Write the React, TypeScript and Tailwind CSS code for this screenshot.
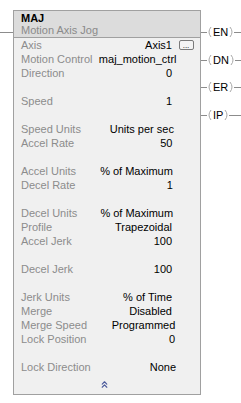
import { ChevronsUp } from "lucide-react";

type Row = { label: string; value: string } | null;

const rows: Row[] = [
  { label: "Axis", value: "Axis1" },
  { label: "Motion Control", value: "maj_motion_ctrl" },
  { label: "Direction", value: "0" },
  null,
  { label: "Speed", value: "1" },
  null,
  { label: "Speed Units", value: "Units per sec" },
  { label: "Accel Rate", value: "50" },
  null,
  { label: "Accel Units", value: "% of Maximum" },
  { label: "Decel Rate", value: "1" },
  null,
  { label: "Decel Units", value: "% of Maximum" },
  { label: "Profile", value: "Trapezoidal" },
  { label: "Accel Jerk", value: "100" },
  null,
  { label: "Decel Jerk", value: "100" },
  null,
  { label: "Jerk Units", value: "% of Time" },
  { label: "Merge", value: "Disabled" },
  { label: "Merge Speed", value: "Programmed" },
  { label: "Lock Position", value: "0" },
  null,
  { label: "Lock Direction", value: "None" },
];

const outputs = [
  { name: "EN", mt: "mt-[15px]" },
  { name: "DN", mt: "mt-[14px]" },
  { name: "ER", mt: "mt-[13px]" },
  { name: "IP", mt: "mt-[14px]" },
];

function Coil({ name }: { name: string }) {
  return (
    <div className="flex items-center h-[14px]">
      <div className="w-[6px] h-px bg-[#8c8c8c]" />
      <svg width="5" height="12" viewBox="0 0 5 12" className="shrink-0">
        <path d="M4 1 Q0 6 4 11" fill="none" stroke="#a8a8a8" strokeWidth="1" />
      </svg>
      <span className="px-[1px] text-black leading-none">{name}</span>
      <svg width="5" height="12" viewBox="0 0 5 12" className="shrink-0">
        <path d="M1 1 Q5 6 1 11" fill="none" stroke="#a8a8a8" strokeWidth="1" />
      </svg>
      <div className="flex-1 h-px bg-[#8c8c8c]" />
    </div>
  );
}

export default function App() {
  return (
    <div className="w-[241px] h-[403px] bg-white overflow-hidden font-['Liberation_Sans',Arial,sans-serif] text-[11px]">
      <div className="flex pt-[10px]">
        <div className="w-[13px] shrink-0">
          <div className="mt-[22px] h-px bg-[#8c8c8c]" />
        </div>
        <div className="w-[188px] shrink-0 border border-[#a0a0a0] bg-[#f0f0f0]">
          <div className="bg-[#dcdcdc] border-b border-[#a0a0a0] h-[27px] px-[7px] pt-[1px]">
            <div className="text-black font-bold leading-[12px]">MAJ</div>
            <div className="text-[#8a8a8a] leading-[13px]">Motion Axis Jog</div>
          </div>
          <div className="pl-[7px]">
            {rows.map((r, i) =>
              r ? (
                <div key={i} className="flex items-center h-[14px]">
                  <span className="text-[#8c8c8c] flex-1 whitespace-nowrap">{r.label}</span>
                  <span className="text-black w-[100px] text-right whitespace-nowrap">{r.value}</span>
                  <div className="w-[28px] flex justify-center">
                    {r.label === "Axis" && (
                      <div className="w-[15px] h-[10px] border border-[#7a7a7a] rounded-[2px] bg-[#f4f4f4] flex items-end justify-center text-[8px] leading-[7px] text-black">
                        ...
                      </div>
                    )}
                  </div>
                </div>
              ) : (
                <div key={i} className="h-[14px]" />
              )
            )}
          </div>
          <div className="h-[20px] flex justify-center items-center pr-[6px]">
            <ChevronsUp size={11} strokeWidth={2.5} color="#4b5a9c" />
          </div>
        </div>
        <div className="flex-1 flex flex-col">
          {outputs.map((o) => (
            <div key={o.name} className={o.mt}>
              <Coil name={o.name} />
            </div>
          ))}
        </div>
      </div>
    </div>
  );
}
